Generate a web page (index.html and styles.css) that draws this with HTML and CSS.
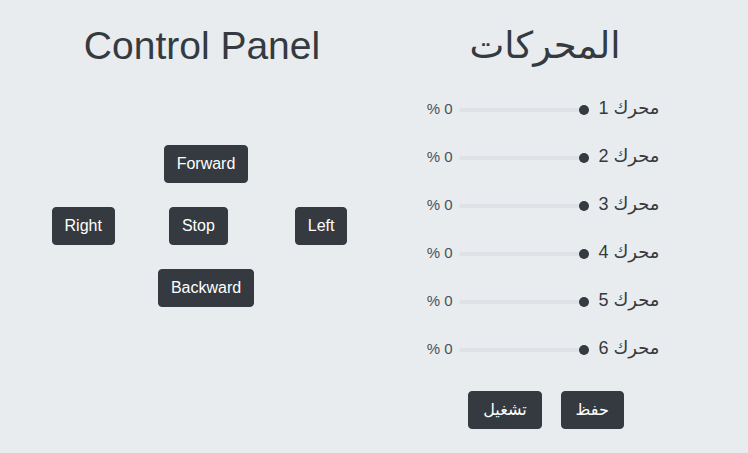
FILE: index.html
```html
<!DOCTYPE html>
<html dir="rtl" lang="ar">
<head>
<meta charset="utf-8">
<title>لوحة التحكم</title>
<link rel="stylesheet" href="styles.css">
</head>
<body>
<div class="container">
  <section class="col motors">
    <h1 class="title title-ar">المحركات</h1>
    <div class="motor-list">
      <div class="motor-row"><label class="motor-label">محرك 1</label><input type="range" class="slider" min="0" max="100" value="0"><span class="motor-value">0 %</span></div>
      <div class="motor-row"><label class="motor-label">محرك 2</label><input type="range" class="slider" min="0" max="100" value="0"><span class="motor-value">0 %</span></div>
      <div class="motor-row"><label class="motor-label">محرك 3</label><input type="range" class="slider" min="0" max="100" value="0"><span class="motor-value">0 %</span></div>
      <div class="motor-row"><label class="motor-label">محرك 4</label><input type="range" class="slider" min="0" max="100" value="0"><span class="motor-value">0 %</span></div>
      <div class="motor-row"><label class="motor-label">محرك 5</label><input type="range" class="slider" min="0" max="100" value="0"><span class="motor-value">0 %</span></div>
      <div class="motor-row"><label class="motor-label">محرك 6</label><input type="range" class="slider" min="0" max="100" value="0"><span class="motor-value">0 %</span></div>
    </div>
    <div class="actions">
      <button class="btn btn-ar">حفظ</button>
      <button class="btn btn-ar">تشغيل</button>
    </div>
  </section>
  <section class="col control">
    <h1 class="title title-en" dir="ltr">Control Panel</h1>
    <div class="pad">
      <div class="pad-row"><button class="btn btn-shift">Forward</button></div>
      <div class="pad-row"><button class="btn btn-left">Left</button><button class="btn btn-stop">Stop</button><button class="btn">Right</button></div>
      <div class="pad-row"><button class="btn btn-shift">Backward</button></div>
    </div>
  </section>
</div>
</body>
</html>
```
FILE: styles.css
```css
html, body {
  margin: 0;
  padding: 0;
}
body {
  background: #e9ecef;
  color: #343a40;
  font-family: "Liberation Sans", "DejaVu Sans", sans-serif;
}
.container {
  width: 688px;
  margin: 0 auto;
  padding-top: 22px;
  display: flex;
}
.col {
  width: 344px;
  display: flex;
  flex-direction: column;
  align-items: center;
}
.title {
  margin: 0;
  font-size: 39px;
  line-height: 48px;
  font-weight: 400;
  color: #343a40;
}
.title-ar {
  font-size: 37px;
  margin-right: 2px;
}
.motor-list {
  margin-top: 14px;
  display: flex;
  flex-direction: column;
}
.motor-row {
  height: 48px;
  display: flex;
  align-items: center;
  justify-content: center;
  margin-right: 4px;
}
.motor-label {
  width: 60px;
  font-size: 18px;
  white-space: nowrap;
  color: #343a40;
}
.slider {
  -webkit-appearance: none;
  appearance: none;
  width: 130px;
  height: 10px;
  margin: 3px 11px 0 6px;
  padding: 0;
  background: transparent;
}
.slider::-webkit-slider-runnable-track {
  height: 4px;
  background: #dee2e6;
  border-radius: 2px;
}
.slider::-webkit-slider-thumb {
  -webkit-appearance: none;
  appearance: none;
  width: 10px;
  height: 10px;
  margin-top: -3px;
  border: 0;
  border-radius: 50%;
  background: #343a40;
}
.motor-value {
  width: 24px;
  font-size: 15px;
  text-align: left;
  white-space: nowrap;
  color: #495057;
}
.actions {
  margin-top: 19px;
  display: flex;
  gap: 19px;
  justify-content: center;
}
.btn {
  font-family: "Liberation Sans", "DejaVu Sans", sans-serif;
  font-size: 16px;
  line-height: 24px;
  padding: 6px 12px;
  border: 1px solid #343a40;
  border-radius: 4px;
  background: #343a40;
  color: #fff;
  cursor: pointer;
}
.btn-ar {
  padding: 6px 14px;
}
.pad {
  margin-top: 75px;
  display: flex;
  flex-direction: column;
  gap: 24px;
  align-self: stretch;
}
.pad-row {
  display: flex;
  justify-content: center;
}
.btn-shift {
  margin-left: 8px;
}
.btn-left {
  margin-right: 5px;
}
.btn-stop {
  margin: 0 67px 0 54px;
}
```
